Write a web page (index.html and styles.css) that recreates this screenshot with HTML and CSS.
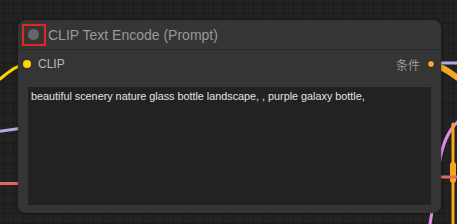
FILE: index.html
```html
<!DOCTYPE html>
<html>
<head>
<meta charset="utf-8">
<link rel="stylesheet" href="styles.css">
</head>
<body>
<div class="canvas">
  <svg class="wires" width="457" height="224" viewBox="0 0 457 224">
    <path d="M-10 86 C 6 76, 12 66, 27 64" class="w yellow"/>
    <path d="M-5 132 L 30 127" class="w lav"/>
    <path d="M-5 183.5 L 30 183.5" class="w red"/>
    <path d="M431 63 L 460 63" class="w lav"/>
    <path d="M431 65 C 445 67, 450 73, 458 78" class="w orange thick"/>
    <path d="M462 118 C 446 130, 440 150, 438 175 L 430 224" class="w pink"/>
    <path d="M453 124 L 453 224" class="w orange"/>
    <path d="M453 165 L 453 180" class="w orange thick"/>
    <path d="M430 177 L 460 177" class="w red"/>
  </svg>
  <div class="node">
    <div class="title">
      <span class="collapse"><span class="dot"></span></span>
      <span class="title-text">CLIP Text Encode (Prompt)</span>
    </div>
    <div class="slots">
      <div class="slot in"><span class="sdot yellow-dot"></span><span>CLIP</span></div>
      <div class="slot out"><span>条件</span><span class="sdot orange-dot"></span></div>
    </div>
    <div class="prompt">beautiful scenery nature glass bottle landscape, , purple galaxy bottle,</div>
  </div>
</div>
</body>
</html>
```
FILE: styles.css
```css
html, body { margin: 0; padding: 0; }
body { width: 457px; height: 224px; overflow: hidden; font-family: "Liberation Sans", Arial, sans-serif; }
.canvas {
  position: relative;
  width: 457px; height: 224px;
  background-color: #222;
  background-image:
    linear-gradient(to right, #1b1b1b 1px, transparent 1px),
    linear-gradient(to bottom, #1b1b1b 1px, transparent 1px);
  background-size: 10px 10px;
  background-position: 3px 3px;
  overflow: hidden;
}
.wires { position: absolute; left: 0; top: 0; }
.w { fill: none; stroke-width: 3; stroke-linecap: round; }
.yellow { stroke: #ffd500; }
.lav { stroke: #b5a7e0; }
.red { stroke: #e06a6a; }
.orange { stroke: #f5a623; }
.pink { stroke: #e38be0; }
.thick { stroke-width: 6; }
.node {
  position: absolute;
  left: 18px; top: 20px;
  width: 423px; height: 193px;
  background: #353535;
  border-radius: 8px;
  box-shadow: 0 0 3px rgba(0,0,0,0.5);
  display: flex; flex-direction: column;
}
.title {
  height: 29px;
  border-bottom: 1px solid #2b2b2b;
  display: flex; align-items: center;
  padding-left: 4px;
}
.collapse {
  width: 20px; height: 18px;
  border: 2px solid #e0261f;
  display: flex; align-items: center; justify-content: center;
  box-sizing: content-box;
}
.dot { width: 11px; height: 11px; border-radius: 50%; background: #666; margin-left: -2px; }
.title-text { color: #999; font-size: 14px; margin-left: 2px; }
.slots {
  height: 28px;
  display: flex; justify-content: space-between; align-items: center;
  padding: 0 6px 0 5px;
  font-size: 12px; color: #b8b8b8;
}
.slot { display: flex; align-items: center; gap: 7px; }
.slot.out { gap: 7px; font-family: "Noto Sans CJK SC", sans-serif; font-size: 12px; color: #999; }
.sdot { width: 8px; height: 8px; border-radius: 50%; box-sizing: border-box; border: 1px solid #1e1e1e; }
.yellow-dot { background: #ffd500; border: none; }
.orange-dot { background: #ffa931; }
.prompt {
  margin: 9px 10px 8px 10px;
  flex: 1;
  background: #222;
  color: #e2e2e2;
  font-family: "Liberation Sans", Arial, sans-serif;
  font-size: 10.8px;
  padding: 3px 3px;
}
```
